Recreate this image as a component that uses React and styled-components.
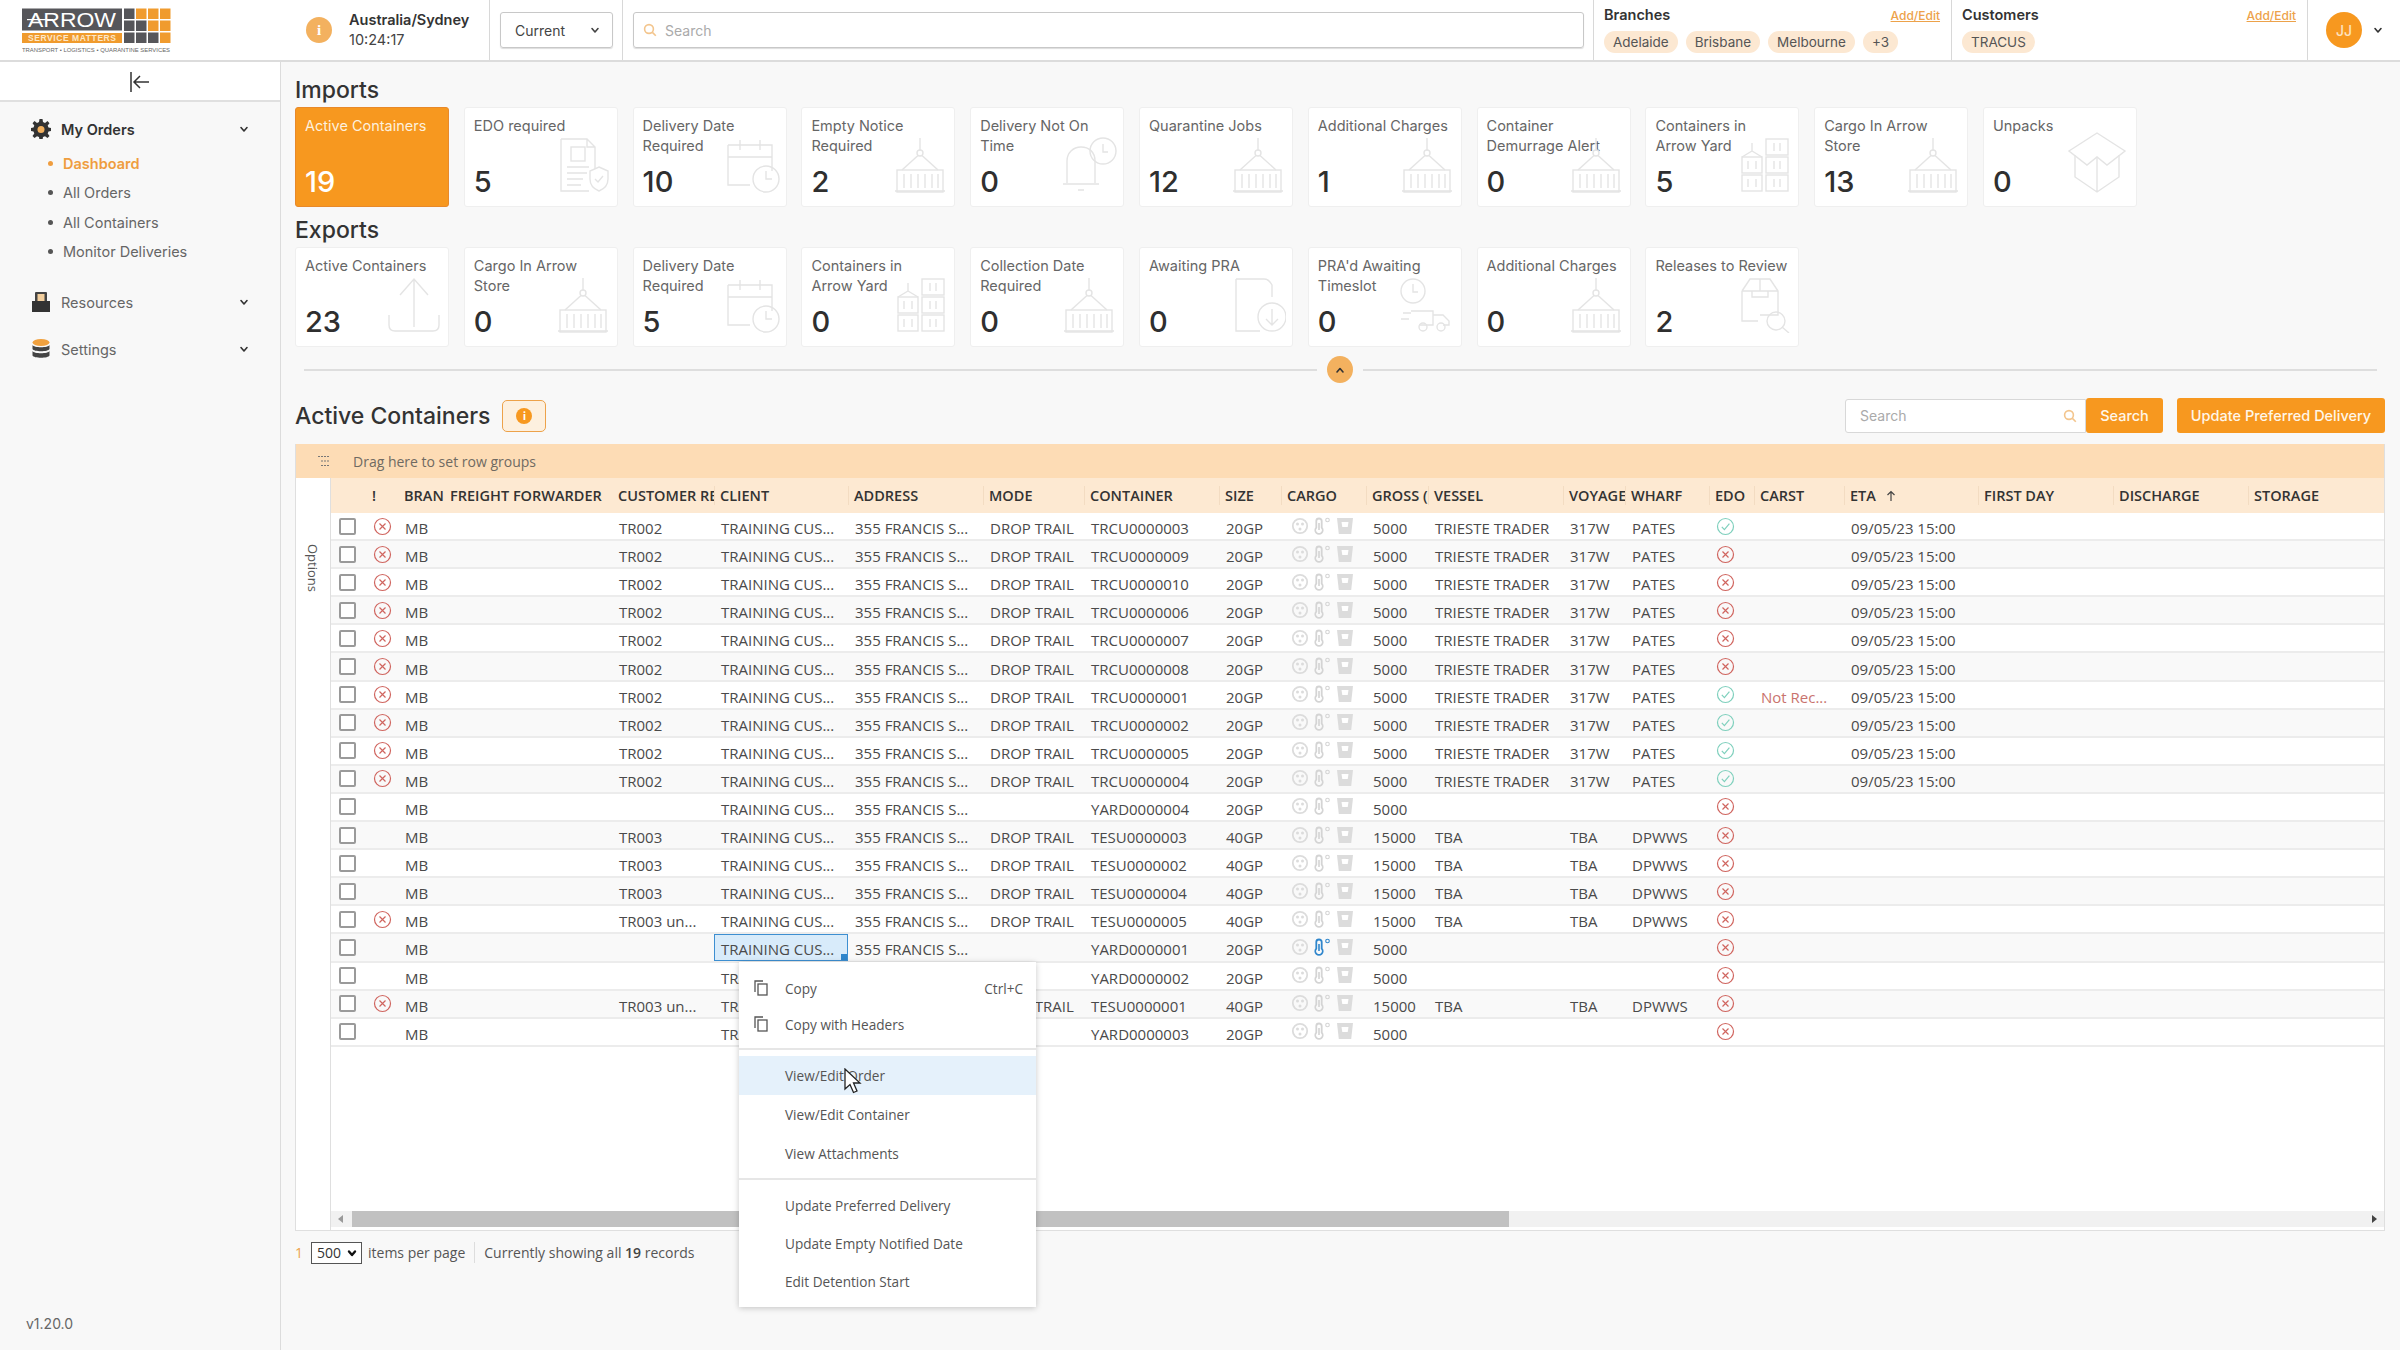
import React from 'react';
import styled, { createGlobalStyle } from 'styled-components';

const Global = createGlobalStyle`
  html, body { margin: 0; padding: 0; background: #f8f8f8; }
  * { box-sizing: border-box; }
  body { font-family: Inter, "Liberation Sans", sans-serif; color: #333; }
`;

const ORANGE = '#f7981f';

const Page = styled.div`
  width: 2400px; height: 1350px; display: flex; flex-direction: column; overflow: hidden; background: #f8f8f8;
`;
const Header = styled.header`
  height: 62px; flex: none; display: flex; background: #fff; border-bottom: 2px solid #dcdcdc;
`;
const LogoBox = styled.div`
  width: 280px; flex: none; padding: 8px 0 0 22px;
`;
const TimeBox = styled.div`
  width: 210px; flex: none; display: flex; align-items: center; gap: 17px; padding-left: 26px; border-right: 1px solid #d8d8d8;
`;
const InfoDot = styled.div`
  width: 26px; height: 26px; border-radius: 50%; background: #f3b15f; color: #fff; font: 700 15px "Liberation Serif", serif;
  display: flex; align-items: center; justify-content: center; flex: none;
`;
const TimeText = styled.div`
  line-height: 20px; font-size: 14.5px; color: #444;
  strong { display: block; font-weight: 600; color: #333; }
`;
const SelectWrap = styled.div`
  width: 133px; flex: none; display: flex; align-items: center; padding: 0 0 0 10px; border-right: 1px solid #d8d8d8;
`;
const CurrentSelect = styled.div`
  width: 113px; height: 36px; border: 1px solid #c8c8c8; border-radius: 3px; display: flex; align-items: center; justify-content: space-between;
  padding: 0 11px 0 14px; font-size: 14px; color: #444; box-shadow: 0 1px 1px #ddd;
`;
const SearchWrap = styled.div`
  width: 971px; flex: none; display: flex; align-items: center; padding: 0 9px 0 10px; border-right: 1px solid #d8d8d8;
`;
const TopSearch = styled.div`
  width: 100%; height: 36px; border: 1px solid #c8c8c8; border-radius: 3px; display: flex; align-items: center; gap: 8px; padding: 0 9px;
  font-size: 14px; color: #aaa; box-shadow: 0 1px 1px #ddd;
`;
const Picker = styled.div`
  width: ${p => p.$w}px; flex: none; padding: 5px 11px 0 10px; border-right: 1px solid #d8d8d8;
`;
const PickerHead = styled.div`
  display: flex; justify-content: space-between; align-items: center; height: 18px; font-size: 14.5px; font-weight: 600; color: #333;
  a { font-size: 12px; font-weight: 500; color: #eda24a; text-decoration: underline; margin-top: 2px; }
`;
const Chips = styled.div`
  display: flex; gap: 8px; margin-top: 8px;
`;
const Chip = styled.span`
  height: 22px; padding: 0 9px; border-radius: 11px; background: #fce8d2; font-size: 13.5px; color: #555; display: flex; align-items: center;
`;
const UserBox = styled.div`
  flex: 1; display: flex; align-items: center; gap: 10px; padding-left: 18px;
`;
const Avatar = styled.div`
  width: 36px; height: 36px; border-radius: 50%; background: ${ORANGE}; color: #fde3c0; font-size: 14px; font-weight: 500;
  display: flex; align-items: center; justify-content: center;
`;
const Body = styled.div`
  flex: 1; display: flex; min-height: 0;
`;
const Sidebar = styled.aside`
  width: 281px; flex: none; background: #f8f8f8; border-right: 1px solid #dcdcdc; display: flex; flex-direction: column;
`;
const Collapse = styled.div`
  height: 40px; flex: none; background: #fff; border-bottom: 2px solid #e0e0e0; display: flex; align-items: center; justify-content: center; padding-top: 2px;
`;
const Nav = styled.nav`
  flex: 1; padding: 5px 18px 0 11px; display: flex; flex-direction: column;
`;
const NavHead = styled.div`
  display: flex; align-items: center; height: 44px; padding: 0 12px 0 20px; gap: 10px; font-size: 14.5px;
  color: ${p => (p.$active ? '#333' : '#666')}; font-weight: ${p => (p.$active ? 600 : 400)};
  margin-top: ${p => p.$mt || 0}px;
  span { flex: 1; }
`;
const SubList = styled.ul`
  list-style: none; margin: -2px 0 0; padding: 0 0 0 37px;
`;
const SubItem = styled.li`
  height: 29.3px; display: flex; align-items: center; gap: 10px; font-size: 14.5px;
  color: ${p => (p.$active ? '#ef9d3f' : '#666')}; font-weight: ${p => (p.$active ? 600 : 400)};
  &::before { content: ''; width: 5px; height: 5px; border-radius: 50%; background: ${p => (p.$active ? '#ef9d3f' : '#555')}; }
`;
const Version = styled.div`
  font-size: 14px; color: #666; padding: 0 0 18px 26px;
`;
const Main = styled.main`
  flex: 1; min-width: 0; padding: 14px 15px 0 14px; position: relative;
`;
const SectionTitle = styled.h2`
  margin: 0 0 3px; font-size: 23px; font-weight: 500; color: #333; line-height: 28px;
`;
const ToolTitle = styled(SectionTitle)`
  margin: 0;
`;
const Cards = styled.div`
  display: flex; gap: 14.8px; margin: 0 0 9px;
`;
const Card = styled.div`
  position: relative; width: 154px; height: 100px; flex: none; border-radius: 3px; padding: 8px 8px 9px 9px;
  background: ${p => (p.$on ? ORANGE : '#fff')}; border: 1px solid ${p => (p.$on ? '#e8892a' : '#efefef')};
  color: ${p => (p.$on ? '#fdf0dd' : '#666')}; font-size: 14.5px; line-height: 20px;
`;
const CardNum = styled.div`
  position: absolute; left: 9px; top: 58px; font-size: 29px; line-height: 32px; font-weight: 500;
  color: ${p => (p.$on ? '#fff' : '#2f2f2f')};
`;
const CardIcon = styled.svg`
  position: absolute; right: 6px; bottom: 13px; width: 56px; height: 56px; fill: none; stroke: #e4e4e4; stroke-width: 1.4;
`;
const BigIcon = styled(CardIcon)`
  right: 7px; bottom: 12px; width: 64px; height: 63px;
`;
const Rule = styled.div`
  height: 2px; background: #dedede; margin: 22px 8px 0 9px; position: relative;
`;
const RuleBtn = styled.div`
  position: absolute; left: 1013px; top: -13px; width: 46px; height: 28px; background: #f8f8f8; display: flex; justify-content: center;
  span { width: 26px; height: 27px; border-radius: 50%; background: #f3b15f; display: flex; align-items: center; justify-content: center; }
`;
const ToolRow = styled.div`
  display: flex; align-items: center; height: 35px; margin-top: 27px; margin-bottom: 11px;
`;
const InfoBadge = styled.div`
  margin-left: 12px; width: 44px; height: 32px; border: 1px solid #eda24a; border-radius: 5px; background: #fdf0df;
  display: flex; align-items: center; justify-content: center;
  span { width: 16px; height: 16px; border-radius: 50%; background: ${ORANGE}; color: #fff; font-size: 11px; font-weight: 700; text-align: center; line-height: 16px; }
`;
const Spacer = styled.div` flex: 1; `;
const GridSearch = styled.div`
  width: 241px; height: 34px; background: #fff; border: 1px solid #d8d8d8; border-radius: 3px 0 0 3px; display: flex; align-items: center;
  justify-content: space-between; padding: 0 8px 0 14px; font-size: 14px; color: #aaa;
`;
const OrangeBtn = styled.button`
  height: 35px; border: 0; border-radius: 3px; background: ${ORANGE}; color: #fff6e8; font: 500 14.5px Inter, sans-serif; padding: 0;
  width: ${p => p.$w}px; margin-left: ${p => p.$ml || 0}px;
`;
const Grid = styled.div`
  position: relative; width: 2090px; height: 787px; border: 1px solid #dfdfdf; border-top: 0; background: #fff; display: flex; flex-direction: column;
  font-family: "Open Sans", sans-serif;
`;
const GroupBar = styled.div`
  height: 34px; flex: none; background: #fddcb5; display: flex; align-items: center; gap: 22px; padding-left: 21px; font-size: 14px; color: #6f6a62;
`;
const GridBody = styled.div`
  flex: 1; display: flex; min-height: 0;
`;
const SideTab = styled.div`
  width: 35px; flex: none; border-right: 1px solid #dfdfdf; display: flex; justify-content: center; padding-top: 66px;
  span { writing-mode: vertical-rl; font-size: 13px; color: #555; height: 60px; }
`;
const GridMain = styled.div`
  flex: 1; min-width: 0; display: flex; flex-direction: column;
`;
const COLS = '35px 32px 46px 168px 102px 134px 135px 101px 135px 62px 85px 62px 135px 62px 84px 45px 90px 134px 135px 135px 136px';
const HeadRow = styled.div`
  display: grid; grid-template-columns: ${COLS}; height: 35px; flex: none; background: #fde9d2; align-items: center;
  font-size: 14.5px; font-weight: 600; color: #333;
`;
const HeadCell = styled.div`
  white-space: nowrap; overflow: hidden; padding-left: ${p => (p.$sep ? 5 : 6)}px; display: flex; align-items: center; gap: 9px;
  border-left: ${p => (p.$sep ? '1px solid #f3dcc2' : '0')};
`;
const Row = styled.div`
  display: grid; grid-template-columns: ${COLS}; height: 28.1px; align-items: center; background: ${p => (p.$alt ? '#f9f9f9' : '#fff')};
  border-bottom: 2px solid #ececec; font-size: 15px; color: #444;
`;
const Cell = styled.div`
  height: 100%; white-space: nowrap; overflow: hidden; padding: 4px 0 0 7px; display: flex; align-items: center; position: relative;
  color: ${p => p.$c || '#4a4a4a'};
  ${p => p.$sel && 'background:#d8ebfa;border:1px solid #3d8fd1;padding:3px 0 0 6px;'}
`;
const Handle = styled.i`
  position: absolute; right: 0; bottom: 0; width: 6px; height: 6px; background: #2f86cc;
`;
const Check = styled.span`
  width: 17px; height: 17px; border: 2px solid #9a9a9a; border-radius: 2px; background: #fff; margin: -4px 0 0 1px;
`;
const RowList = styled.div`
  flex: 1; min-height: 0;
`;
const ScrollBar = styled.div`
  height: 16px; flex: none; background: #f1f1f1; display: flex; align-items: center; margin-bottom: 3px; position: relative;
`;
const Thumb = styled.div`
  position: absolute; left: 21px; width: 1157px; height: 16px; background: #c1c1c1;
`;
const Arrow = styled.span`
  position: absolute; top: 4px; ${p => p.$r ? 'right: 7px; border-left: 5px solid #444;' : 'left: 7px; border-right: 5px solid #999;'}
  border-top: 4px solid transparent; border-bottom: 4px solid transparent;
`;
const Pager = styled.div`
  height: 21px; margin-top: 11px; display: flex; align-items: center; font: 14px "Open Sans", sans-serif; color: #555;
  b { color: #444; font-weight: 600; }
`;
const PageNo = styled.span` color: #eda24a; width: 16px; `;
const PageSize = styled.div`
  width: 51px; height: 22px; border: 1px solid #555; display: flex; align-items: center; justify-content: space-between; padding: 0 3px 0 5px; margin-right: 6px; color: #333; background:#fff;
`;
const PagerNote = styled.span`
  margin-left: 9px; padding-left: 9px; border-left: 1px solid #ddd; height: 21px; line-height: 21px;
`;
const Menu = styled.div`
  position: absolute; left: 443px; top: 518px; width: 297px; height: 345px; background: #fff; box-shadow: 0 1px 6px rgba(0,0,0,.22); padding: 8px 0; font-family: "Open Sans", sans-serif; z-index: 5;
  font-size: 13.6px; color: #555;
`;
const MenuItem = styled.div`
  display: flex; align-items: center; height: ${p => p.$h || 38}px; padding: 0 13px 0 46px; position: relative; background: ${p => (p.$hi ? '#e5f1fb' : 'transparent')};
  span { flex: 1; }
  svg { position: absolute; left: 14px; top: 50%; margin-top: -8px; }
`;
const MenuSep = styled.div`
  height: 2px; background: #e6e6e6; margin: ${p => p.$m || '6px 0'};
`;
const Cursor = styled.svg`
  position: absolute; left: 548px; top: 624px; width: 18px; height: 26px; z-index: 6;
`;

const Chev = ({ up, c = '#444', s = 12, w = 1.6 }) => (
  <svg width={s} height={s} viewBox="0 0 12 12" fill="none" stroke={c} strokeWidth={w} strokeLinecap="round" strokeLinejoin="round">
    <path d={up ? 'M3 8 6 4.5 9 8' : 'M3 4.5 6 8 9 4.5'} />
  </svg>
);
const SearchIcon = ({ c = '#f3c58d' }) => (
  <svg width="14" height="14" viewBox="0 0 14 14" fill="none" stroke={c} strokeWidth="1.6"><circle cx="6" cy="6" r="4.4" /><path d="m9.4 9.4 3.4 3.4" /></svg>
);

const Logo = () => (
  <svg width="150" height="46" viewBox="0 0 150 46">
    <rect x="0" y="0.5" width="100" height="22" fill="#56565a" />
    <text x="50" y="18.5" textAnchor="middle" fill="#fff" fontFamily="Liberation Sans" fontSize="20" textLength="88" lengthAdjust="spacingAndGlyphs">ARROW</text>
    <rect x="5" y="11" width="26" height="1.2" fill="#fff" />
    <rect x="0" y="25" width="100" height="10" fill="#f09b2e" />
    <text x="50" y="33.4" textAnchor="middle" fill="#fde7c8" fontFamily="Liberation Sans" fontWeight="700" fontSize="8.5" textLength="88" lengthAdjust="spacing">SERVICE MATTERS</text>
    {[0, 1, 2].map(r => [0, 1, 2, 3].map(c => (
      <rect key={`${r}${c}`} x={102 + c * 12} y={0.5 + r * 12} width="10.5" height="10.5" fill={c - r > 0 ? '#f09b2e' : '#56565a'} />
    )))}
    <text x="0" y="43.5" fill="#666" fontFamily="Liberation Sans" fontSize="6" textLength="148" lengthAdjust="spacingAndGlyphs">TRANSPORT • LOGISTICS • QUARANTINE SERVICES</text>
  </svg>
);

const icons = {
  crane: <><path d="M28 1v12" /><circle cx="28" cy="16" r="3" /><path d="M26 18.5 10 33M30 18.5 46 33" /><rect x="5" y="33" width="46" height="22" /><path d="M3 54h50M12 37v14M19 37v14M26 37v14M33 37v14M40 37v14M46 37v14" /></>,
  cal: <><path d="M4 8h44v26M4 8v40h22M4 20h44M16 3v10M36 3v10" /><circle cx="42" cy="42" r="13" /><path d="M42 34v8h6" /></>,
  doc: <><path d="M6 2h26l8 8v22M6 2v52h28M32 2v8h8" /><rect x="16" y="10" width="14" height="14" /><path d="M12 30h22M12 36h20M12 42h16M12 48h14" /><path d="M44 30l9 4v8c0 6-4 10-9 12-5-2-9-6-9-12v-8z" /><path d="m40 42 3 3 5-6" /></>,
  bell: <><path d="M6 46V24c0-8 6-14 14-14s14 5 14 14v22M2 47h36M17 53h6" /><circle cx="42" cy="14" r="13" /><path d="M42 7v8h5" /></>,
  stack: <><rect x="30" y="2" width="22" height="16" /><rect x="30" y="20" width="22" height="16" /><rect x="30" y="38" width="22" height="16" /><rect x="6" y="20" width="20" height="16" /><rect x="6" y="38" width="20" height="16" /><path d="M16 6v8M6 20l10-6 10 6M38 6v8M44 6v8M38 24v8M44 24v8M38 42v8M44 42v8M12 24v8M20 24v8M12 42v8M20 42v8" /></>,
  upload: <><path d="M28 50V2M14 18 28 2l14 16" /><path d="M3 38v10c0 4 2 6 6 6h38c4 0 6-2 6-6V38" /></>,
  file: <><path d="M6 2h28c4 0 6 2 8 6v12M6 2v52h24" /><circle cx="42" cy="40" r="14" /><path d="M42 32v16M36 42l6 6 6-6" /></>,
  truck: <><circle cx="14" cy="14" r="12" /><path d="M14 7v8h5M12 34h22v14H20M34 38h10l6 6v4h-6M4 36h8M2 42h8" /><circle cx="24" cy="50" r="4" /><circle cx="42" cy="50" r="4" /></>,
  pack: <><path d="M6 14 14 2h20l8 12v24H24M6 14v30h16M6 14h36M24 2v12h-8v6h16v-6h-8" /><circle cx="40" cy="44" r="9" /><path d="m46 50 7 6" /></>,
};

const imports = [
  ['Active Containers', 19, null, true], ['EDO required', 5, 'doc'], ['Delivery Date Required', 10, 'cal'], ['Empty Notice Required', 2, 'crane'],
  ['Delivery Not On Time', 0, 'bell'], ['Quarantine Jobs', 12, 'crane'], ['Additional Charges', 1, 'crane'], ['Container Demurrage Alert', 0, 'crane'],
  ['Containers in Arrow Yard', 5, 'stack'], ['Cargo In Arrow Store', 13, 'crane'], ['Unpacks', 0, 'box'],
];
const exportsList = [
  ['Active Containers', 23, 'upload'], ['Cargo In Arrow Store', 0, 'crane'], ['Delivery Date Required', 5, 'cal'], ['Containers in Arrow Yard', 0, 'stack'],
  ['Collection Date Required', 0, 'crane'], ['Awaiting PRA', 0, 'file'], ["PRA'd Awaiting Timeslot", 0, 'truck'], ['Additional Charges', 0, 'crane'], ['Releases to Review', 2, 'pack'],
];

const CardGlyph = ({ name }) => {
  if (!name) return null;
  if (name === 'box') {
    return (
      <BigIcon viewBox="0 0 64 63">
        <path d="M32 2 60 20 42 34 32 26 22 34 4 20Z" /><path d="M10 24V46L32 61 54 46V24M32 26V61" />
      </BigIcon>
    );
  }
  return <CardIcon viewBox="0 0 56 56">{icons[name]}</CardIcon>;
};

const heads = ['', '!', 'BRAN', 'FREIGHT FORWARDER', 'CUSTOMER REF', 'CLIENT', 'ADDRESS', 'MODE', 'CONTAINER', 'SIZE', 'CARGO', 'GROSS (KG)', 'VESSEL', 'VOYAGE', 'WHARF', 'EDO', 'CARST', 'ETA', 'FIRST DAY', 'DISCHARGE', 'STORAGE'];

const T = (c, edo, carst) => ({ status: true, ref: 'TR002', mode: 'DROP TRAIL', c, size: '20GP', gross: '5000', vessel: 'TRIESTE TRADER', voyage: '317W', wharf: 'PATES', edo, carst, eta: '09/05/23 15:00' });
const Y = (c, blue, sel) => ({ c, size: '20GP', gross: '5000', edo: false, blue, sel });
const E = (c, status) => ({ status, ref: status ? 'TR003 un...' : 'TR003', mode: 'DROP TRAIL', c, size: '40GP', gross: '15000', vessel: 'TBA', voyage: 'TBA', wharf: 'DPWWS', edo: false });
const rows = [
  T('TRCU0000003', true), T('TRCU0000009', false), T('TRCU0000010', false), T('TRCU0000006', false), T('TRCU0000007', false), T('TRCU0000008', false),
  T('TRCU0000001', true, 'Not Rec...'), T('TRCU0000002', true), T('TRCU0000005', true), T('TRCU0000004', true),
  Y('YARD0000004'), E('TESU0000003'), E('TESU0000002'), E('TESU0000004'), E('TESU0000005', true),
  Y('YARD0000001', true, true), Y('YARD0000002'), E('TESU0000001', true), Y('YARD0000003'),
];

const CrossIcon = () => (
  <svg width="19" height="19" viewBox="0 0 19 19" fill="none" stroke="#d0655f" strokeWidth="1.2" style={{ marginTop: -4 }}>
    <circle cx="9.5" cy="9.5" r="8" /><path d="m6.5 6.5 6 6M12.5 6.5l-6 6" />
  </svg>
);
const TickIcon = () => (
  <svg width="19" height="19" viewBox="0 0 19 19" fill="none" stroke="#7fd0bd" strokeWidth="1.2" style={{ marginTop: -4 }}>
    <circle cx="9.5" cy="9.5" r="8" /><path d="m5.8 9.8 2.6 2.8 5-6" />
  </svg>
);
const CargoIcons = ({ blue }) => {
  const t = blue ? '#2f86cc' : '#d4d4d4';
  return (
    <svg width="64" height="18" viewBox="0 0 64 18" style={{ marginTop: -5, marginLeft: 3, flex: 'none' }}>
      <circle cx="9" cy="9" r="7.200" fill="none" stroke="#dcdcdc" strokeWidth="1.800" />
      <circle cx="6.500" cy="7" r="1.500" fill="#dcdcdc" /><circle cx="11.500" cy="7" r="1.500" fill="#dcdcdc" /><circle cx="9" cy="12" r="1.500" fill="#dcdcdc" />
      <path d="M28 1.500c-1.700 0-2.700 1-2.700 2.500v6.600a3.700 3.700 0 1 0 5.400 0V4c0-1.500-1-2.500-2.700-2.500z" fill="none" stroke={t} strokeWidth="1.800" />
      <path d="M28 6v7" stroke={t} strokeWidth="1.600" />
      <circle cx="36.500" cy="3" r="1.800" fill="none" stroke={t} strokeWidth="1.100" />
      <path d="M46 1h16l-1.800 16H47.800z" fill="#dcdcdc" /><path d="M50.500 5h7l-.8 5h-5.400z" fill="#fff" />
    </svg>
  );
};
const CopyIcon = () => (
  <svg width="16" height="16" viewBox="0 0 16 16" fill="none" stroke="#555" strokeWidth="1.300"><path d="M2 12V1h8" /><rect x="5" y="4" width="9" height="11" /></svg>
);

export default function App() {
  return (
    <Page>
      <Global />
      <Header>
        <LogoBox><Logo /></LogoBox>
        <TimeBox>
          <InfoDot>i</InfoDot>
          <TimeText><strong>Australia/Sydney</strong>10:24:17</TimeText>
        </TimeBox>
        <SelectWrap><CurrentSelect>Current <Chev /></CurrentSelect></SelectWrap>
        <SearchWrap><TopSearch><SearchIcon />Search</TopSearch></SearchWrap>
        <Picker $w={358}>
          <PickerHead>Branches<a>Add/Edit</a></PickerHead>
          <Chips><Chip>Adelaide</Chip><Chip>Brisbane</Chip><Chip>Melbourne</Chip><Chip>+3</Chip></Chips>
        </Picker>
        <Picker $w={356}>
          <PickerHead>Customers<a>Add/Edit</a></PickerHead>
          <Chips><Chip>TRACUS</Chip></Chips>
        </Picker>
        <UserBox><Avatar>JJ</Avatar><Chev c="#333" /></UserBox>
      </Header>
      <Body>
        <Sidebar>
          <Collapse>
            <svg width="22" height="22" viewBox="0 0 22 22" fill="none" stroke="#333" strokeWidth="1.5"><path d="M2 1v20M20 11H5M11 5l-6 6 6 6" /></svg>
          </Collapse>
          <Nav>
            <NavHead $active>
              <svg width="20" height="20" viewBox="0 0 20 20"><path d="M8.500 0h3l.5 3 2 .9L16.500 2l2 2.200-1.800 2.400.8 2 3 .4v3l-3 .5-.8 2 1.800 2.400-2 2.100-2.500-1.800-2 .8-.5 3h-3l-.5-3-2-.8-2.500 1.800-2-2.100 1.800-2.400-.8-2-3-.5V9l3-.4.8-2L1.500 4.200l2-2.200L6 3.900 8 3z" fill="#333" /><circle cx="10" cy="10.500" r="3.500" fill="#f3b15f" /></svg>
              <span>My Orders</span><Chev c="#333" />
            </NavHead>
            <SubList>
              <SubItem $active>Dashboard</SubItem>
              <SubItem>All Orders</SubItem>
              <SubItem>All Containers</SubItem>
              <SubItem>Monitor Deliveries</SubItem>
            </SubList>
            <NavHead $mt={14}>
              <svg width="20" height="20" viewBox="0 0 20 20"><rect x="4" y="0" width="12" height="12" rx="1" fill="#444" /><rect x="6.500" y="2" width="7" height="7" fill="#f3cf9e" /><path d="M1 9h18v11H1z" fill="#333" /></svg>
              <span>Resources</span><Chev c="#333" />
            </NavHead>
            <NavHead $mt={3}>
              <svg width="20" height="20" viewBox="0 0 20 20"><ellipse cx="10" cy="3.500" rx="8.500" ry="3.500" fill="#f0a13f" /><path d="M1.500 6c1 3 16 3 17 0v4c-1 3-16 3-17 0z" fill="#444" /><path d="M1.500 12c1 3 16 3 17 0v4.500c-1 3-16 3-17 0z" fill="#444" /></svg>
              <span>Settings</span><Chev c="#333" />
            </NavHead>
          </Nav>
          <Version>v1.20.0</Version>
        </Sidebar>
        <Main>
          <SectionTitle>Imports</SectionTitle>
          <Cards>
            {imports.map(([t, n, ic, on]) => (
              <Card key={t} $on={on}>{t}<CardNum $on={on}>{n}</CardNum><CardGlyph name={ic} /></Card>
            ))}
          </Cards>
          <SectionTitle>Exports</SectionTitle>
          <Cards>
            {exportsList.map(([t, n, ic]) => (
              <Card key={t}>{t}<CardNum>{n}</CardNum><CardGlyph name={ic} /></Card>
            ))}
          </Cards>
          <Rule><RuleBtn><span><Chev c="#333" up /></span></RuleBtn></Rule>
          <ToolRow>
            <ToolTitle>Active Containers</ToolTitle>
            <InfoBadge><span>i</span></InfoBadge>
            <Spacer />
            <GridSearch>Search<SearchIcon /></GridSearch>
            <OrangeBtn $w={77}>Search</OrangeBtn>
            <OrangeBtn $w={208} $ml={14}>Update Preferred Delivery</OrangeBtn>
          </ToolRow>
          <Grid>
            <GroupBar>
              <svg width="14" height="12" viewBox="0 0 14 12" fill="none" stroke="#777" strokeWidth="1.200" strokeDasharray="2 1"><path d="M1 1.500h12M4 6h9M4 10.500h9" /></svg>
              Drag here to set row groups
            </GroupBar>
            <GridBody>
              <SideTab><span>Options</span></SideTab>
              <GridMain>
                <HeadRow>
                  {heads.map((h, i) => (
                    <HeadCell key={i} $sep={i > 4}>{h}{h === 'ETA' && <svg width="12" height="12" viewBox="0 0 12 12" fill="none" stroke="#444" strokeWidth="1.200"><path d="M6 11V2M2.500 5 6 1.500 9.500 5" /></svg>}</HeadCell>
                  ))}
                </HeadRow>
                <RowList>
                  {rows.map((r, i) => (
                    <Row key={i} $alt={i % 2 === 1}>
                      <Cell><Check /></Cell>
                      <Cell>{r.status && <CrossIcon />}</Cell>
                      <Cell>MB</Cell>
                      <Cell />
                      <Cell>{r.ref}</Cell>
                      <Cell $sel={r.sel}>TRAINING CUS...{r.sel && <Handle />}</Cell>
                      <Cell>355 FRANCIS S...</Cell>
                      <Cell>{r.mode}</Cell>
                      <Cell>{r.c}</Cell>
                      <Cell>{r.size}</Cell>
                      <Cell><CargoIcons blue={r.blue} /></Cell>
                      <Cell>{r.gross}</Cell>
                      <Cell>{r.vessel}</Cell>
                      <Cell>{r.voyage}</Cell>
                      <Cell>{r.wharf}</Cell>
                      <Cell>{r.edo ? <TickIcon /> : <CrossIcon />}</Cell>
                      <Cell $c="#c9736e">{r.carst}</Cell>
                      <Cell>{r.eta}</Cell>
                      <Cell /><Cell /><Cell />
                    </Row>
                  ))}
                </RowList>
                <ScrollBar><Arrow /><Thumb /><Arrow $r /></ScrollBar>
              </GridMain>
            </GridBody>
            <Menu>
              <MenuItem $h={36}><CopyIcon /><span>Copy</span>Ctrl+C</MenuItem>
              <MenuItem $h={36}><CopyIcon /><span>Copy with Headers</span></MenuItem>
              <MenuSep $m="6px 0 6px" />
              <MenuItem $h={39} $hi><span>View/Edit Order</span></MenuItem>
              <MenuItem $h={39}><span>View/Edit Container</span></MenuItem>
              <MenuItem $h={38}><span>View Attachments</span></MenuItem>
              <MenuSep $m="6px 0 6px" />
              <MenuItem $h={38}><span>Update Preferred Delivery</span></MenuItem>
              <MenuItem $h={38}><span>Update Empty Notified Date</span></MenuItem>
              <MenuItem $h={38}><span>Edit Detention Start</span></MenuItem>
            </Menu>
            <Cursor viewBox="0 0 18 26"><path d="M1 1v20l5-4.500 3.500 8 3.500-1.500-3.500-8h6.500z" fill="#fff" stroke="#222" strokeWidth="1.300" /></Cursor>
          </Grid>
          <Pager>
            <PageNo>1</PageNo>
            <PageSize>500<Chev c="#111" w={2.4} /></PageSize>
            items per page
            <PagerNote>Currently showing all <b>19</b> records</PagerNote>
          </Pager>
        </Main>
      </Body>
    </Page>
  );
}
